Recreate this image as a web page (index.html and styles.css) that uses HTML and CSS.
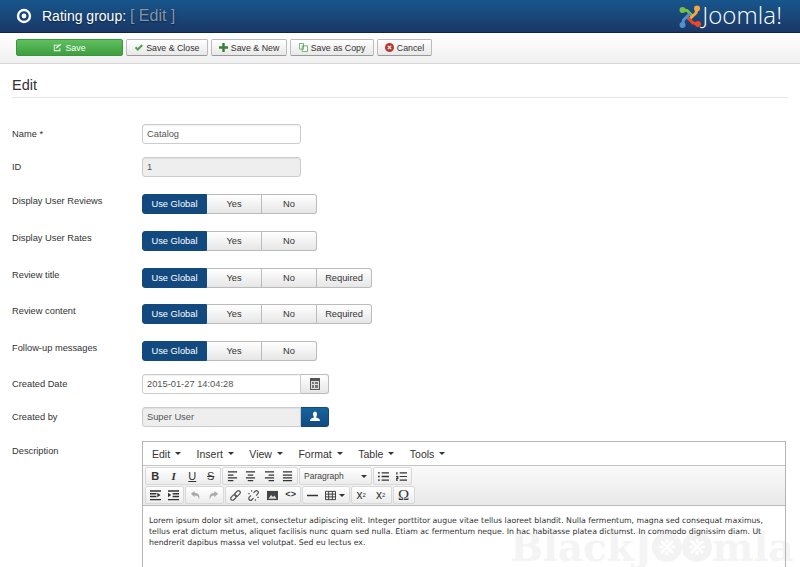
FILE: index.html
```html
<!DOCTYPE html>
<html lang="en">
<head>
<meta charset="utf-8">
<title>Rating group: [ Edit ]</title>
<link rel="stylesheet" href="styles.css">
</head>
<body>
<header class="topbar">
  <svg class="title-icon" width="16" height="16" viewBox="0 0 16 16"><circle cx="8" cy="8" r="6" fill="none" stroke="#fff" stroke-width="2.4"/><circle cx="8" cy="8" r="2.4" fill="#fff"/></svg>
  <h1 class="title">Rating group: <small class="title-sub">[ Edit ]</small></h1>
  <div class="logo">
    <svg width="24" height="24" viewBox="0 0 24 24"><g fill="none" stroke-width="3" stroke-linejoin="round"><path d="M4.500 6 L9 6.500 L15 12.500" stroke="#7ac143"/><path d="M19 4.500 L18 9 L11 15.500" stroke="#f9a541"/><path d="M20 20 L15 19 L9 13" stroke="#f44321"/><path d="M4.500 21 L5.500 16 L12 9.500" stroke="#5091cd"/></g><circle cx="4.500" cy="6" r="3" fill="#7ac143"/><circle cx="19" cy="4.500" r="3" fill="#f9a541"/><circle cx="20" cy="20" r="3" fill="#f44321"/><circle cx="4.500" cy="21" r="3" fill="#5091cd"/></svg>
    <span class="logo-text">Joomla!</span>
  </div>
</header>
<nav class="toolbar">
  <button class="btn btn-save"><svg class="btn-ic" viewBox="0 0 11 11"><path d="M1 2h6v1H2v6h6V6h1v4H1z" fill="#fff"/><path d="M4 5l5-4 1 1-5 4-2 1z" fill="#fff"/></svg>Save</button>
  <button class="btn"><svg class="btn-ic" viewBox="0 0 12 11"><path d="M1 6l2-2 2 2 5-5 2 2-7 7z" fill="#51a351"/></svg>Save &amp; Close</button>
  <button class="btn"><svg class="btn-ic" viewBox="0 0 11 11"><path d="M4 0h3v4h4v3H7v4H4V7H0V4h4z" fill="#378137"/></svg>Save &amp; New</button>
  <button class="btn"><svg class="btn-ic" viewBox="0 0 11 11"><path d="M.5.5h5v7h-5zM4 3.500h6.500v7H4z" fill="#fff" stroke="#51a351"/></svg>Save as Copy</button>
  <button class="btn"><svg class="btn-ic" viewBox="0 0 11 11"><circle cx="5.500" cy="5.500" r="5.500" fill="#bd362f"/><path d="M3.500 3.500l4 4m0-4l-4 4" stroke="#fff" stroke-width="1.600"/></svg>Cancel</button>
</nav>
<main class="content">
  <h2 class="legend">Edit</h2>
  <form class="form">
    <div class="row row-input"><label class="label">Name *</label><input class="input" value="Catalog"></div>
    <div class="row"><label class="label">ID</label><input class="input input-off" value="1" readonly></div>
    <div class="row row-switch"><label class="label">Display User Reviews</label><div class="switch"><span class="opt opt-on">Use Global</span><span class="opt">Yes</span><span class="opt">No</span></div></div>
    <div class="row row-switch"><label class="label">Display User Rates</label><div class="switch"><span class="opt opt-on">Use Global</span><span class="opt">Yes</span><span class="opt">No</span></div></div>
    <div class="row row-switch row-short"><label class="label">Review title</label><div class="switch"><span class="opt opt-on">Use Global</span><span class="opt">Yes</span><span class="opt">No</span><span class="opt">Required</span></div></div>
    <div class="row row-switch"><label class="label">Review content</label><div class="switch"><span class="opt opt-on">Use Global</span><span class="opt">Yes</span><span class="opt">No</span><span class="opt">Required</span></div></div>
    <div class="row row-switch row-tight"><label class="label">Follow-up messages</label><div class="switch"><span class="opt opt-on">Use Global</span><span class="opt">Yes</span><span class="opt">No</span></div></div>
    <div class="row row-tight"><label class="label">Created Date</label><div class="group"><input class="input input-group" value="2015-01-27 14:04:28"><span class="addon"><svg width="12" height="12" viewBox="0 0 12 12"><path d="M1 0h10v12H1z" fill="#555"/><path d="M2 3h8v8H2z" fill="#ddd"/><path d="M3 4h2v2H3zm3 0h3v2H6zM3 7h2v3H3zm3 0h3v3H6z" fill="#777"/></svg></span></div></div>
    <div class="row row-user"><label class="label">Created by</label><div class="group"><input class="input input-group input-off" value="Super User" readonly><span class="addon addon-blue"><svg width="12" height="12" viewBox="0 0 12 12"><path d="M4 3a2 2.500 0 1 1 4 0c0 2-1 3-1 3.500 2 .5 4 1 4 3.500H1c0-2.500 2-3 4-3.500C5 6 4 5 4 3z" fill="#fff"/></svg></span></div></div>
    <div class="row row-editor"><label class="label">Description</label>
      <div class="editor">
        <div class="menubar">
          <span class="menu">Edit<i class="caret"></i></span><span class="menu">Insert<i class="caret"></i></span><span class="menu">View<i class="caret"></i></span><span class="menu">Format<i class="caret"></i></span><span class="menu">Table<i class="caret"></i></span><span class="menu">Tools<i class="caret"></i></span>
        </div>
        <div class="tools">
          <div class="toolrow">
            <div class="tg"><b class="tb tb-b">B</b><i class="tb tb-i">I</i><u class="tb">U</u><s class="tb">S</s></div>
            <div class="tg">
              <span class="tb"><svg class="ic" viewBox="0 0 12 12"><path d="M1 1h10M1 4.500h6M1 7.500h10M1 10.500h6" stroke="#333" stroke-width="1.500"/></svg></span>
              <span class="tb"><svg class="ic" viewBox="0 0 12 12"><path d="M1 1h10M3 4.500h6M1 7.500h10M3 10.500h6" stroke="#333" stroke-width="1.500"/></svg></span>
              <span class="tb"><svg class="ic" viewBox="0 0 12 12"><path d="M1 1h10M5 4.500h6M1 7.500h10M5 10.500h6" stroke="#333" stroke-width="1.500"/></svg></span>
              <span class="tb"><svg class="ic" viewBox="0 0 12 12"><path d="M1 1h10M1 4.500h10M1 7.500h10M1 10.500h10" stroke="#333" stroke-width="1.500"/></svg></span>
            </div>
            <div class="tg tg-select"><span class="sel">Paragraph</span><i class="caret caret-dark"></i></div>
            <div class="tg">
              <span class="tb"><svg class="ic" viewBox="0 0 12 12"><path d="M4 2h8M4 6h8M4 10h8M0 2h2M0 6h2M0 10h2" stroke="#333" stroke-width="1.400"/></svg></span>
              <span class="tb"><svg class="ic" viewBox="0 0 12 12"><path d="M4 2h8M4 6h8M4 10h8M1 1v3M0 6h2v2H0v2h2" stroke="#333" stroke-width="1.200" fill="none"/></svg></span>
            </div>
          </div>
          <div class="toolrow">
            <div class="tg">
              <span class="tb"><svg class="ic" viewBox="0 0 12 12"><path d="M0 1h12M0 4h7M0 7h7M0 10.500h12" stroke="#333" stroke-width="1.600"/><path d="M8 3l3.500 2.500L8 8z" fill="#333"/></svg></span>
              <span class="tb"><svg class="ic" viewBox="0 0 12 12"><path d="M0 1h12M5 4h7M5 7h7M0 10.500h12" stroke="#333" stroke-width="1.600"/><path d="M0 3l3.500 2.500L0 8z" fill="#333"/></svg></span>
            </div>
            <div class="tg">
              <span class="tb"><svg class="ic" viewBox="0 0 12 12"><path d="M1 4l4-3v2c4 0 6 3 5 7-1-3-2-4-5-4v2z" fill="#aaa"/></svg></span>
              <span class="tb"><svg class="ic" viewBox="0 0 12 12"><path d="M11 4L7 1v2C3 3 1 6 2 10c1-3 2-4 5-4v2z" fill="#aaa"/></svg></span>
            </div>
            <div class="tg">
              <span class="tb"><svg class="ic" viewBox="0 0 12 12"><g transform="rotate(-45 6 6)" fill="none" stroke="#555" stroke-width="1.300"><rect x="-.5" y="4" width="7" height="4" rx="2"/><rect x="5.500" y="4" width="7" height="4" rx="2"/></g></svg></span>
              <span class="tb"><svg class="ic" viewBox="0 0 12 12"><g transform="rotate(-45 6 6)" fill="none" stroke="#555" stroke-width="1.300"><path d="M4 4H1.500a2 2 0 0 0 0 4H4M8 4h2.500a2 2 0 0 1 0 4H8"/></g><path d="M4 0v2M0 4h2M8 10v2M10 8h2" stroke="#555"/></svg></span>
              <span class="tb"><svg class="ic" viewBox="0 0 12 12"><path d="M0 1h12v10H0z" fill="#444"/><path d="M1.500 9.500l3-4 2 2 1.500-1.500 2.500 3.500z" fill="#ddd"/></svg></span>
              <span class="tb tb-code">&lt;&gt;</span>
            </div>
            <div class="tg">
              <span class="tb"><svg class="ic" viewBox="0 0 12 12"><path d="M0 6h12" stroke="#333" stroke-width="1.600"/></svg></span>
              <span class="tb tb-wide"><svg class="ic" viewBox="0 0 12 12"><path d="M.5 1.500h11v9H.500zM.5 4.500h11M.5 7.500h11M4 1.500v9M8 1.500v9" stroke="#333" fill="none"/></svg><i class="caret caret-dark"></i></span>
            </div>
            <div class="tg">
              <span class="tb tb-sc">x<sub>2</sub></span>
              <span class="tb tb-sc">x<sup>2</sup></span>
            </div>
            <div class="tg"><span class="tb tb-om">Ω</span></div>
          </div>
        </div>
        <div class="body-text">
          <p class="lorem">Lorem ipsum dolor sit amet, consectetur adipiscing elit. Integer porttitor augue vitae tellus laoreet blandit. Nulla fermentum, magna sed consequat maximus, tellus erat dictum metus, aliquet facilisis nunc quam sed nulla. Etiam ac fermentum neque. In hac habitasse platea dictumst. In commodo dignissim diam. Ut hendrerit dapibus massa vel volutpat. Sed eu lectus ex.</p>
        </div>
      </div>
    </div>
  </form>
</main>
<div class="watermark">
  <span class="wm-text">BlackJ</span>
  <svg class="wm-o" viewBox="0 0 30 30"><circle cx="15" cy="15" r="15" fill="#f3f3f3"/><path d="M9 9l12 12M21 9L9 21M15 7v4M7 15h4M23 15h-4M15 23v-4" stroke="#fff" stroke-width="2.500"/></svg>
  <svg class="wm-o" viewBox="0 0 30 30"><circle cx="15" cy="15" r="15" fill="#f3f3f3"/><path d="M9 9l12 12M21 9L9 21M15 7v4M7 15h4M23 15h-4M15 23v-4" stroke="#fff" stroke-width="2.500"/></svg>
  <span class="wm-text">mla</span>
</div>
</body>
</html>
```
FILE: styles.css
```css
* { box-sizing: border-box; }
html, body { margin: 0; padding: 0; height: 567px; overflow: hidden; }
body { position: relative; font-family: "Liberation Sans", Arial, sans-serif; font-size: 10px; color: #333; background: #fff; }

.topbar { height: 33px; display: flex; align-items: center; padding: 0 16px; background: linear-gradient(#17568c, #1a3867); border-bottom: 1px solid #0f2647; }
.title-icon { flex: none; margin-right: 10px; }
.title { margin: 0; font-size: 14px; font-weight: 400; color: #fff; text-shadow: 0 1px 2px rgba(0,0,0,.5); }
.title-sub { font-size: 16px; color: #8594a6; }
.logo { margin-left: auto; display: flex; align-items: center; margin-right: 2px; height: 32px; }
.logo-text { font-family: "Open Sans", sans-serif; font-size: 24px; line-height: 32px; font-weight: 300; color: #fff; letter-spacing: .1px; margin-top: -3px; }

.toolbar { height: 31px; display: flex; align-items: flex-start; gap: 3px; padding: 6px 16px 0; background: linear-gradient(#fff, #f0f0f0); border-bottom: 1px solid #d8d8d8; }
.btn { height: 17px; padding: 0 7.200px; display: flex; align-items: center; justify-content: center; gap: 3px; font: 8.800px "Liberation Sans", Arial, sans-serif; color: #333; background: linear-gradient(#fff, #e8e8e8); border: 1px solid #bbb; border-bottom-color: #999; border-radius: 2px; }
.btn-ic { width: 9px; height: 9px; flex: none; }
.btn-save { width: 107px; color: #fff; background: linear-gradient(#5ec05e, #3f9e3f); border-color: #3f933f; }

.content { padding: 0 12px; }
.legend { margin: 0 0 26px; height: 34px; padding-top: 12px; font-size: 14.500px; line-height: 18px; font-weight: 400; color: #333; border-bottom: 1px solid #e5e5e5; }

.row { display: flex; align-items: flex-start; min-height: 20px; margin-bottom: 17px; }
.row-input { margin-bottom: 13px; }
.row-tight { margin-bottom: 13px; }
.row-short { margin-bottom: 16px; }
.row-user { margin-bottom: 14px; }
.label { width: 130px; flex: none; font-size: 9.300px; line-height: 20px; height: 20px; color: #333; }
.row-switch .label { margin-top: -3px; }
.row-editor { margin: 0; }

.input { width: 159px; height: 20px; padding: 0 4px; font: 9.300px "Liberation Sans", Arial, sans-serif; color: #555; border: 1px solid #ccc; border-radius: 3px; box-shadow: inset 0 1px 1px rgba(0,0,0,.06); background: #fff; }
.input-off { background: #eee; }
.group { display: flex; }
.input-group { border-radius: 3px 0 0 3px; }
.addon { width: 28px; height: 20px; display: flex; align-items: center; justify-content: center; background: linear-gradient(#fff, #e6e6e6); border: 1px solid #bbb; border-left: 0; border-radius: 0 3px 3px 0; }
.addon-blue { background: linear-gradient(#17649f, #124a80); border-color: #124a80; }

.switch { display: flex; height: 20px; }
.opt { width: 55px; height: 20px; display: flex; align-items: center; justify-content: center; font-size: 9.300px; color: #333; background: linear-gradient(#fff, #e6e6e6); border: 1px solid #bbb; border-left-width: 0; }
.opt:last-child { border-radius: 0 3px 3px 0; }
.opt-on { width: 65px; color: #fff; background: #124a80; border: 1px solid #124a80; border-radius: 3px 0 0 3px; }

.editor { position: relative; z-index: 1; flex: 1; border: 1px solid #b5b5b5; border-bottom: 0; height: 140px; display: flex; flex-direction: column; margin-right: 2px; }
.menubar { height: 24px; display: flex; align-items: center; padding-left: 1px; background: #fff; border-bottom: 1px solid #c5c5c5; }
.menu { display: flex; align-items: center; gap: 5px; padding: 0 8px; margin-right: -.500px; font-size: 10.500px; color: #333; }
.caret { width: 0; height: 0; border: 3px solid transparent; border-top-color: #333; border-bottom-width: 0; display: inline-block; }
.caret-dark { border-top-color: #333; }
.tools { height: 40px; padding: 1px 2px; display: flex; flex-direction: column; gap: 1px; background: linear-gradient(#fafafa, #e9e9e9); border-bottom: 1px solid #bbb; }
.toolrow { display: flex; gap: 1px; height: 18px; }
.tg { display: flex; height: 18px; border: 1px solid #d8d8d8; border-radius: 2px; background: linear-gradient(#fff, #ececec); }
.tg-select { width: 73px; align-items: center; justify-content: space-between; padding: 0 4px; }
.sel { font-size: 8.500px; color: #444; }
.tb { width: 18.500px; height: 16px; display: flex; align-items: center; justify-content: center; font-size: 11px; font-weight: 400; font-style: normal; color: #333; text-decoration: none; }
u.tb { text-decoration: underline; }
s.tb { text-decoration: line-through; }
.tb-b { font-weight: 700; }
.tb-i { font-style: italic; font-family: "Liberation Serif", serif; font-weight: 700; }
.tb-code { font-size: 9px; font-family: "Liberation Mono", monospace; font-weight: 700; }
.tb-wide { width: 27px; gap: 3px; }
.tb-sc { width: 19.500px; font-size: 12px; }
.tb-sc sub, .tb-sc sup { font-size: 6px; line-height: 0; }
.tb-om { width: 20px; font-size: 15px; font-family: "Liberation Serif", serif; }
.ic { width: 11px; height: 11px; display: block; }

.body-text { flex: 1; padding: 9px 6px; }
.lorem { margin: 0; font-family: "DejaVu Sans", Verdana, sans-serif; font-size: 7.760px; line-height: 11px; color: #333; }

.watermark { position: absolute; left: 510px; top: 532px; z-index: 0; display: flex; align-items: center; height: 30px; pointer-events: none; white-space: nowrap; }
.wm-text { font-family: "DejaVu Serif", serif; font-weight: 700; font-size: 39px; line-height: 30px; color: #f4f4f4; }
.wm-o { width: 30px; height: 30px; flex: none; }
```
